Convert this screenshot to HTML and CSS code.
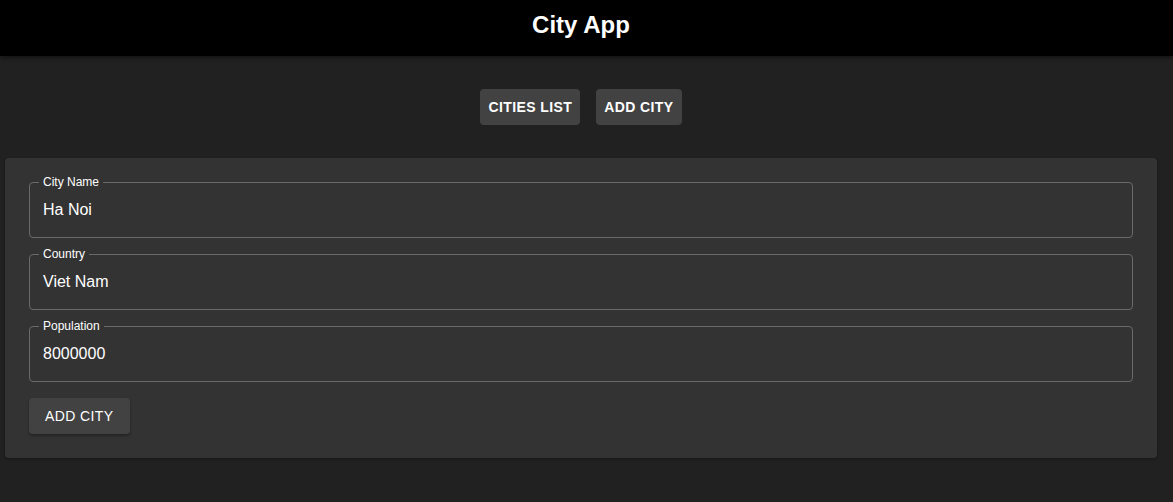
FILE: index.html
```html
<!DOCTYPE html>
<html>
<head>
<meta charset="utf-8">
<link rel="stylesheet" href="styles.css">
</head>
<body>
<header class="appbar"><h1 class="title">City App</h1></header>
<main class="container">
  <nav class="nav">
    <button class="nav-btn">Cities List</button>
    <button class="nav-btn">Add City</button>
  </nav>
  <form class="paper">
    <div class="field"><label class="field-label">City Name</label><span class="field-value">Ha Noi</span></div>
    <div class="field"><label class="field-label">Country</label><span class="field-value">Viet Nam</span></div>
    <div class="field"><label class="field-label">Population</label><span class="field-value">8000000</span></div>
    <div class="actions"><button type="button" class="submit-btn">Add City</button></div>
  </form>
</main>
</body>
</html>
```
FILE: styles.css
```css
* { box-sizing: border-box; }
html, body { margin: 0; padding: 0; }
body {
  background: #212121;
  color: #fff;
  font-family: "Liberation Sans", Arial, sans-serif;
  height: 502px;
}
.appbar {
  background: #000;
  height: 56px;
  display: flex;
  align-items: center;
  justify-content: center;
  padding: 0 16px 0 5px;
  box-shadow: 0 2px 4px rgba(0,0,0,0.4);
}
.title {
  margin: 0;
  font-size: 24px;
  font-weight: bold;
  line-height: 1;
  margin-top: -6px;
}
.container {
  margin-left: 5px;
  width: 1152px;
}
.nav {
  display: flex;
  justify-content: center;
  gap: 16px;
  padding-top: 33px;
}
.nav-btn {
  background: #424242;
  color: #fff;
  border: none;
  border-radius: 4px;
  height: 36px;
  padding: 0 8px;
  font-family: inherit;
  font-size: 14px;
  font-weight: bold;
  letter-spacing: 0.4px;
  text-transform: uppercase;
}
.paper {
  margin-top: 33px;
  background: #333;
  border-radius: 4px;
  padding: 24px;
  display: flex;
  flex-direction: column;
  gap: 16px;
  box-shadow: 0 1px 3px rgba(0,0,0,0.3);
}
.field {
  position: relative;
  height: 56px;
  border: 1px solid #6a6a6a;
  border-radius: 4px;
  display: flex;
  align-items: center;
  padding: 0 13px 2px;
}
.field-label {
  position: absolute;
  top: -8px;
  left: 9px;
  padding: 0 4px;
  background: #333;
  font-size: 12px;
  line-height: 14px;
}
.field-value {
  font-size: 16px;
  line-height: 19px;
}
.actions { display: flex; }
.submit-btn {
  background: #424242;
  color: #fff;
  border: none;
  border-radius: 4px;
  height: 36px;
  padding: 0 16px;
  font-family: inherit;
  font-size: 14px;
  letter-spacing: 0.4px;
  text-transform: uppercase;
  box-shadow: 0 2px 3px rgba(0,0,0,0.3);
}
```
